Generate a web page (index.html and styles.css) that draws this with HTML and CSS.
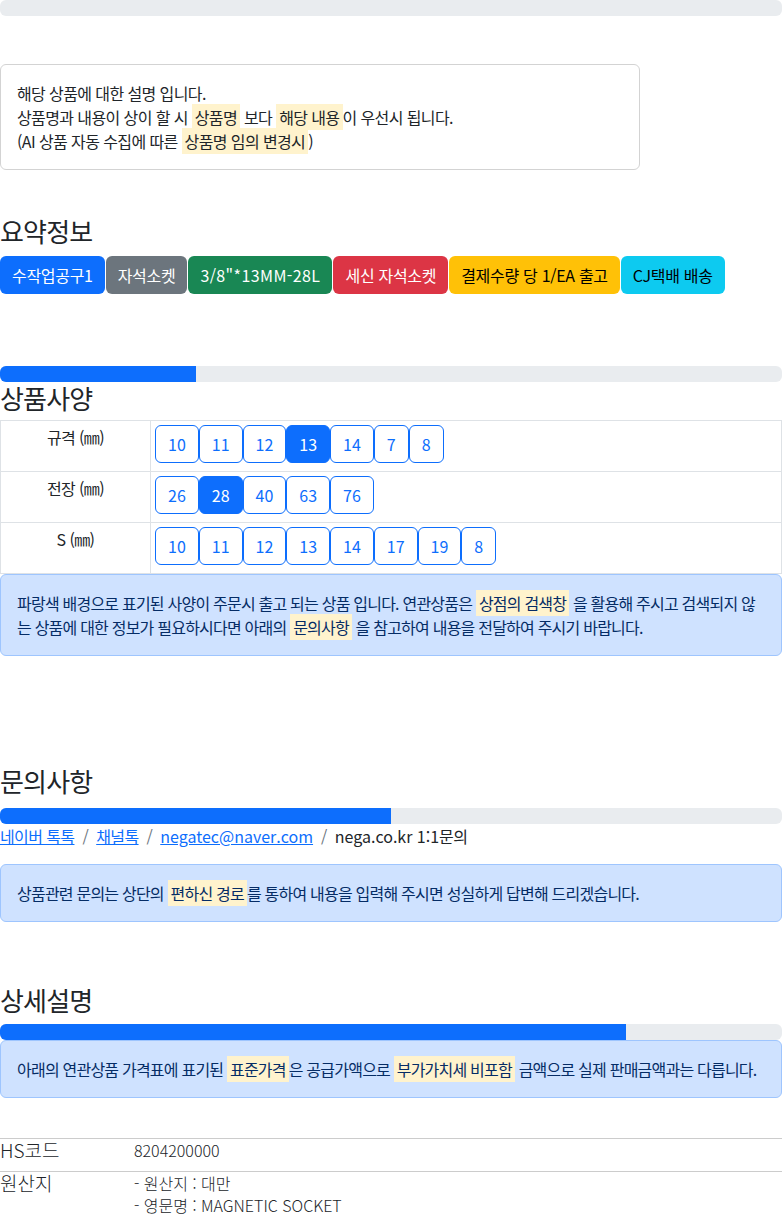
FILE: index.html
```html
<!DOCTYPE html>
<html lang="ko">
<head>
    <meta charset="UTF-8" />
    <meta name="viewport" content="width=device-width, initial-scale=1.0" />
    <title>상품 상세</title>
    <link rel="stylesheet" href="styles.css">
</head>
<body>
    <div class="progress">
        <div class="progress-bar" style="width: 0%"></div>
    </div>

    <div class="notice">
        해당 상품에 대한 설명 입니다.<br>
        상품명과 내용이 상이 할 시 <mark>상품명</mark> 보다 <mark>해당 내용</mark>이 우선시 됩니다.<br>
        (AI 상품 자동 수집에 따른 <mark>상품명 임의 변경시</mark>)
    </div>

    <h2 class="section-title summary-title">요약정보</h2>
    <div class="badges">
        <span class="badge bg-primary">수작업공구1</span>
        <span class="badge bg-secondary">자석소켓</span>
        <span class="badge bg-success badge-code">3/8"*13MM-28L</span>
        <span class="badge bg-danger">세신 자석소켓</span>
        <span class="badge bg-warning">결제수량 당 1/EA 출고</span>
        <span class="badge bg-info">CJ택배 배송</span>
    </div>

    <div class="progress spec-progress">
        <div class="progress-bar" style="width: 25%"></div>
    </div>
    <h2 class="section-title spec-title">상품사양</h2>
    <table class="spec-table">
        <tr>
            <th>규격 (㎜)</th>
            <td>
                <div class="btn-group">
                    <button class="opt">10</button>
                    <button class="opt">11</button>
                    <button class="opt">12</button>
                    <button class="opt active">13</button>
                    <button class="opt">14</button>
                    <button class="opt">7</button>
                    <button class="opt">8</button>
                </div>
            </td>
        </tr>
        <tr>
            <th>전장 (㎜)</th>
            <td>
                <div class="btn-group">
                    <button class="opt">26</button>
                    <button class="opt active">28</button>
                    <button class="opt">40</button>
                    <button class="opt">63</button>
                    <button class="opt">76</button>
                </div>
            </td>
        </tr>
        <tr>
            <th>S (㎜)</th>
            <td>
                <div class="btn-group">
                    <button class="opt">10</button>
                    <button class="opt">11</button>
                    <button class="opt">12</button>
                    <button class="opt">13</button>
                    <button class="opt">14</button>
                    <button class="opt">17</button>
                    <button class="opt">19</button>
                    <button class="opt">8</button>
                </div>
            </td>
        </tr>
    </table>
    <div class="alert">
        파랑색 배경으로 표기된 사양이 주문시 출고 되는 상품 입니다. 연관상품은 <mark>상점의 검색창</mark> 을 활용해 주시고 검색되지 않는 상품에 대한 정보가 필요하시다면 아래의 <mark>문의사항</mark> 을 참고하여 내용을 전달하여 주시기 바랍니다.
    </div>

    <h2 class="section-title inquiry-title">문의사항</h2>
    <div class="progress">
        <div class="progress-bar" style="width: 50%"></div>
    </div>
    <nav class="breadcrumb">
        <a href="#">네이버 톡톡</a>
        <span class="divider">/</span>
        <a href="#">채널톡</a>
        <span class="divider">/</span>
        <a href="#" class="latin">negatec@naver.com</a>
        <span class="divider">/</span>
        <span class="current"><span class="latin">nega.co.kr 1:1</span>문의</span>
    </nav>
    <div class="alert inquiry-alert">
        상품관련 문의는 상단의 <mark>편하신 경로</mark>를 통하여 내용을 입력해 주시면 성실하게 답변해 드리겠습니다.
    </div>

    <h2 class="section-title detail-title">상세설명</h2>
    <div class="progress">
        <div class="progress-bar" style="width: 80%"></div>
    </div>
    <div class="alert">
        아래의 연관상품 가격표에 표기된 <mark>표준가격</mark>은 공급가액으로 <mark>부가가치세 비포함</mark> 금액으로 실제 판매금액과는 다릅니다.
    </div>

    <table class="info-table">
        <tr>
            <th>HS코드</th>
            <td>8204200000</td>
        </tr>
        <tr>
            <th>원산지</th>
            <td>
                - 원산지 : 대만<br>
                - 영문명 : MAGNETIC SOCKET
            </td>
        </tr>
    </table>
</body>
</html>
```

FILE: styles.css
```css
:root {
    --primary-color: #0d6efd;
    --light-gray: #e9ecef;
    --border-color: #dee2e6;
    --text-color: #212529;
    --mark-color: #fff3cd;
}

body {
    margin: 0;
    font-family: "Noto Sans CJK KR", "Noto Sans", sans-serif;
    font-size: 16px;
    line-height: 1.5;
    letter-spacing: -0.6px;
    color: var(--text-color);
    background-color: white;
}

.latin {
    letter-spacing: 0;
}

mark {
    background-color: var(--mark-color);
    color: inherit;
    padding: 1px 3px;
}

.progress {
    height: 16px;
    background-color: var(--light-gray);
    border-radius: 6px;
    overflow: hidden;
    display: flex;
}

.progress-bar {
    background-color: var(--primary-color);
}

.notice {
    width: 640px;
    box-sizing: border-box;
    margin-top: 48px;
    padding: 16px;
    border: 1px solid #d3d3d3;
    border-radius: 6px;
}

.section-title {
    margin: 0;
    font-size: 26px;
    font-weight: 400;
    line-height: 1.2;
    letter-spacing: -0.8px;
}

.summary-title {
    margin: 45px 0 10px;
}

.badges {
    display: flex;
    gap: 1px;
}

.badge {
    padding: 7px 12px;
    border-radius: 6px;
    color: white;
    letter-spacing: -0.3px;
}

.badge-code {
    letter-spacing: 0.4px;
}

.bg-primary { background-color: #0d6efd; }
.bg-secondary { background-color: #6c757d; }
.bg-success { background-color: #198754; }
.bg-danger { background-color: #dc3545; }
.bg-warning { background-color: #ffc107; color: black; }
.bg-info { background-color: #0dcaf0; color: black; }

.spec-progress {
    margin-top: 72px;
}

.spec-title {
    margin-bottom: 7px;
}

.spec-table {
    width: 100%;
    border-collapse: collapse;
}

.spec-table th,
.spec-table td {
    border: 1px solid var(--border-color);
    padding: 4px 4px 8px;
    vertical-align: top;
}

.spec-table th {
    width: 141px;
    font-weight: normal;
    text-align: center;
}

.btn-group {
    display: flex;
}

.opt {
    font-family: inherit;
    font-size: 16px;
    line-height: 24px;
    letter-spacing: 0;
    padding: 6px 12px;
    color: var(--primary-color);
    background-color: white;
    border: 1px solid var(--primary-color);
    border-radius: 6px;
}

.opt.active {
    color: white;
    background-color: var(--primary-color);
}

.alert {
    padding: 16px;
    border: 1px solid #9ec5fe;
    border-radius: 6px;
    background-color: #cfe2ff;
    color: #052c65;
    letter-spacing: -0.78px;
}

.inquiry-title {
    margin: 109px 0 11px;
}

.breadcrumb {
    display: flex;
}

.breadcrumb a {
    color: var(--primary-color);
}

.breadcrumb .divider {
    padding: 0 8px;
    color: #6c757d;
}

.inquiry-alert {
    margin-top: 16px;
}

.detail-title {
    margin: 62px 0 9px;
}

.info-table {
    width: 100%;
    margin-top: 40px;
    border-collapse: collapse;
    letter-spacing: 0;
    font-weight: 300;
}

.info-table th,
.info-table td {
    border-top: 1px solid #ccc;
    padding: 0 0 10px;
    line-height: 22px;
    text-align: left;
    vertical-align: top;
}

.info-table th {
    width: 134px;
    font-size: 19px;
    font-weight: 300;
}

.info-table td {
    font-size: 16px;
}
```
